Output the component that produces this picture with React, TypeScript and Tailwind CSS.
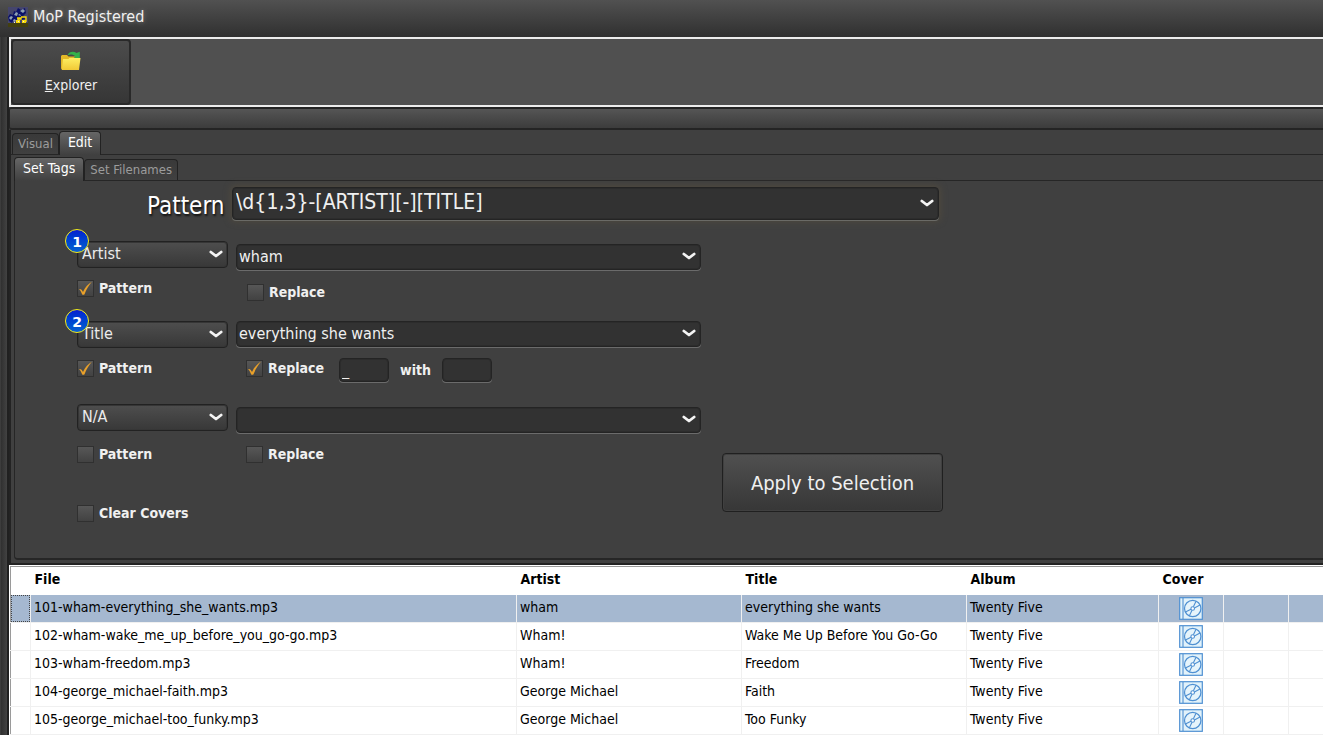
import React from "react";
import { clsx } from "clsx";

type Track = { file: string; artist: string; title: string; album: string };

const tracks: Track[] = [
  { file: "101-wham-everything_she_wants.mp3", artist: "wham", title: "everything she wants", album: "Twenty Five" },
  { file: "102-wham-wake_me_up_before_you_go-go.mp3", artist: "Wham!", title: "Wake Me Up Before You Go-Go", album: "Twenty Five" },
  { file: "103-wham-freedom.mp3", artist: "Wham!", title: "Freedom", album: "Twenty Five" },
  { file: "104-george_michael-faith.mp3", artist: "George Michael", title: "Faith", album: "Twenty Five" },
  { file: "105-george_michael-too_funky.mp3", artist: "George Michael", title: "Too Funky", album: "Twenty Five" },
];

function Chevron() {
  return (
    <svg className="pointer-events-none absolute top-1/2 right-[5px] -mt-[5px] h-2 w-[14px]" viewBox="0 0 14 8" aria-hidden="true">
      <path d="M1.8 2 L7 6 L12.2 2" fill="none" stroke="#f4f4f4" strokeWidth="2.8" strokeLinecap="round" strokeLinejoin="round" />
    </svg>
  );
}

/* Raised drop-down that picks the tag to write */
function TagSelect({ label, value }: { label: string; value: string }) {
  return (
    <div className="relative w-[151px]">
      <select
        aria-label={label}
        defaultValue={value}
        className="block h-[27px] w-full appearance-none rounded-[4px] border border-[#222] bg-linear-to-b from-[#4e4e4e] to-[#383838] pb-px pl-1 text-base leading-5 text-[#ececec] shadow-[inset_0_0_0_1px_#363636]"
      >
        <option>{value}</option>
      </select>
      <Chevron />
    </div>
  );
}

/* Sunken combo box that holds a value */
function Combo({ label, value, large }: { label: string; value: string; large?: boolean }) {
  return (
    <div className={clsx("relative", large ? "w-[707px]" : "w-[465px]")}>
      <select
        aria-label={label}
        defaultValue={value}
        className={clsx(
          "block w-full appearance-none rounded-[4px] border border-[#242424] bg-[#323232] text-[#f0f0f0]",
          large
            ? "h-[33px] pb-[3px] pl-[3px] text-[21px] leading-6 shadow-[inset_0_0_0_1px_#2c2c2c,0_1px_0_#6a6a66,0_0_6px_2px_#4d483e]"
            : "h-[26px] pl-[2px] text-base leading-5 shadow-[inset_0_0_0_1px_#2c2c2c,0_1px_0_#6b6b6b]",
        )}
      >
        <option>{value}</option>
      </select>
      <Chevron />
    </div>
  );
}

function Check({ label, checked }: { label: string; checked?: boolean }) {
  return (
    <label className="flex items-center gap-[5px] text-sm leading-[17px] font-bold text-[#f0f0f0]">
      <span className="relative block size-[17px] shrink-0">
        <input
          type="checkbox"
          defaultChecked={checked}
          className="peer block size-[17px] appearance-none border border-[#303030] bg-linear-to-b from-[#575757] to-[#424242]"
        />
        <svg className="pointer-events-none absolute inset-0 hidden size-[17px] peer-checked:block" viewBox="0 0 17 17" aria-hidden="true">
          <path d="M2.2 9.2 C3.8 8.8 5 10 6 12 C8 7.6 10.8 4.4 15 1.6 C11.8 5.4 9.4 9.6 7.4 14.4 C6.6 15 5.8 15 5.2 14.4 C4.4 12.2 3.4 10.6 2.2 9.2 Z" fill="#e8a02a" />
        </svg>
      </span>
      <span className="-mt-px">{label}</span>
    </label>
  );
}

function Badge({ n }: { n: number }) {
  return (
    <span className="absolute -top-3 -left-3 z-10 flex size-6 items-center justify-center rounded-full border border-[#f2ee1c] bg-linear-to-b from-[#0a1cd0] to-[#0a60d0] pt-px font-['DejaVu_Sans',sans-serif] text-sm leading-none font-bold text-white">
      {n}
    </span>
  );
}

function Tab({ label, active }: { label: string; active?: boolean }) {
  return (
    <button
      type="button"
      role="tab"
      aria-selected={!!active}
      className={clsx(
        "rounded-t-[4px] border border-b-0 border-[#222] leading-5",
        active
          ? "relative z-10 -mb-px h-6 bg-linear-to-b from-[#666] to-[#404040] px-2 pb-1 text-sm text-white"
          : "h-[21px] bg-linear-to-b from-[#393939] to-[#404040] px-[5px] text-[13px] text-[#9c9c9c]",
      )}
    >
      {label}
    </button>
  );
}

function AppLogo() {
  return (
    <svg className="h-5 w-5" viewBox="0 0 20 20" aria-hidden="true">
      <rect width="20" height="17" fill="#45456c" />
      <rect y="16" width="20" height="4" fill="#43400f" />
      <path d="M0 10 L2 7 L5 8 L6 4 L8 5 L10 1 L13 3 L17 1 L18 6 L15 9 L18 11 L14 13 L11 11 L9 15 L6 12 L4 16 L1 14 Z" fill="#0b1268" />
      <path d="M1 11 l2-2 2 1-2 3z M6 8 l2-3 2 1-1 3z M12 4 l3-2 2 2-2 2z M5 13 l2-1 1 2-2 1z M10 8 l2-1 1 2z" fill="#8fa0b4" />
      <path d="M9 11 h4 v1 h-3 v2 M13 10 h5 v5" fill="none" stroke="#f6d90c" strokeWidth="1.4" />
      <path d="M8 13 h4 v3 H8z M14 13 h4 v3 h-4z" fill="#f6d90c" />
      <path d="M10 14 h1 v1 h-1z M15 14 h1 v1 h-1z M6 15 h1 v1 H6z" fill="#f2eee0" />
    </svg>
  );
}

function FolderIcon() {
  return (
    <svg className="h-5 w-5" viewBox="0 0 20 20" aria-hidden="true">
      <defs>
        <linearGradient id="folder" x1="0" y1="0" x2="0" y2="1">
          <stop offset="0" stopColor="#fdee62" />
          <stop offset="1" stopColor="#f1c936" />
        </linearGradient>
      </defs>
      <path d="M0 5 L1 4 H6 L7.5 5.5 H17.5 V18.5 H1 L0 17.5 Z" fill="#e3b927" />
      <path d="M6.5 4.2 C8 .5 12.5 -.2 15.5 2 L18.8 .8 V7 H12.6 L14.4 5.4 C12 3.2 9.2 3.2 6.5 4.2 Z" fill="#33b14a" />
      <path d="M2 8 H7.5 L8.5 7 H19.5 L18 19 H.8 Z" fill="url(#folder)" />
    </svg>
  );
}

function CoverIcon() {
  return (
    <svg className="mx-auto block h-[23px] w-6" viewBox="0 0 24 23" role="img" aria-label="Cover">
      <rect x=".7" y=".7" width="22.6" height="21.6" fill="#e2f2fa" stroke="#4f90d2" strokeWidth="1.2" />
      <path d="M4 1 V22" stroke="#4f90d2" strokeWidth="1.1" />
      <circle cx="13.7" cy="11.5" r="8.2" fill="#e6f4fb" stroke="#4f90d2" strokeWidth="1.2" />
      <circle cx="13.7" cy="11.5" r="1.8" fill="#fff" stroke="#4f90d2" strokeWidth="1.1" />
      <path d="M14.4 9.8 L17 4.2 M15.4 10.9 L21 8 M13 13.2 L10.4 18.8 M12 12.2 L6.4 15" stroke="#4f90d2" strokeWidth="1.1" />
    </svg>
  );
}

const smallInput =
  "block h-6 w-[50px] rounded-[4px] border border-[#242424] bg-[#323232] px-[2px] pb-[2px] text-base leading-5 text-[#f0f0f0] shadow-[inset_0_0_0_1px_#2c2c2c,0_1px_0_#6b6b6b]";

export default function App() {
  return (
    <div className="flex min-h-screen flex-col overflow-hidden bg-[#404040] font-['DejaVu_Sans_Condensed','Noto_Sans',sans-serif]">
      <header className="flex h-[37px] items-center gap-[5px] bg-linear-to-b from-[#515151] to-[#303030] pb-[3px] pl-2">
        <AppLogo />
        <h1 className="text-base leading-5 text-[#f0f0f0] [text-shadow:0_0_5px_#888]">MoP Registered</h1>
      </header>

      <div className="flex grow">
        <div className="w-[9px] shrink-0 border-r-2 border-l border-r-[#202020] border-l-[#3c3c3c] bg-linear-to-r from-[#303030] to-[#424242]" />

        <main className="flex min-w-0 grow flex-col">
          <div className="border-y-2 border-l-2 border-[#ececec] bg-[#505050]">
            <button
              type="button"
              className="flex h-[66px] w-[120px] flex-col items-center rounded-[4px] border-2 border-[#292929] bg-linear-to-b from-[#4c4c4c] to-[#363636] pt-[10px] text-sm leading-5 text-[#f0f0f0]"
            >
              <FolderIcon />
              <span className="mt-1">
                <span className="underline">E</span>xplorer
              </span>
            </button>
          </div>

          <div className="h-[23px] rounded-l-[3px] border-y-2 border-l border-[#242424] bg-linear-to-b from-[#555] to-[#3c3c3c]" />

          <div className="flex grow flex-col border-b-2 border-l-2 border-[#232323] pt-px">
            <div role="tablist" className="flex items-end border-b border-[#262626] pl-px">
              <Tab label="Visual" />
              <Tab label="Edit" active />
            </div>

            <div className="flex grow flex-col pt-[2px] pb-[3px] pl-[3px]">
              <div role="tablist" className="flex items-end border-b border-[#262626]">
                <Tab label="Set Tags" active />
                <Tab label="Set Filenames" />
              </div>

              <form className="h-[379px] rounded-bl-[4px] border-b-2 border-l border-[#262626] pt-[6px] pl-[61px]" onSubmit={(e) => e.preventDefault()}>
                <div className="flex items-center pl-[71px]">
                  <span className="-mb-1 w-[85px] shrink-0 pr-[9px] text-right text-2xl leading-[30px] text-white [text-shadow:1px_2px_2px_#111]">
                    Pattern
                  </span>
                  <Combo large label="Pattern" value="\d{1,3}-[ARTIST][-][TITLE]" />
                </div>

                <div className="flex items-end gap-[21px]">
                  <div className="w-[625px] shrink-0 pt-[21px]">
                    <div className="flex h-20 gap-2 pl-px">
                      <div className="relative flex flex-col gap-3">
                        <Badge n={1} />
                        <TagSelect label="First tag" value="Artist" />
                        <Check label="Pattern" checked />
                      </div>
                      <div className="flex flex-col gap-[14px] pt-[3px]">
                        <Combo label="First value" value="wham" />
                        <div className="pl-[11px]">
                          <Check label="Replace" />
                        </div>
                      </div>
                    </div>

                    <div className="flex h-[83px] gap-2 pl-px">
                      <div className="relative flex flex-col gap-3">
                        <Badge n={2} />
                        <TagSelect label="Second tag" value="Title" />
                        <Check label="Pattern" checked />
                      </div>
                      <div className="flex flex-col gap-[11px]">
                        <Combo label="Second value" value="everything she wants" />
                        <div className="flex items-center pl-[10px]">
                          <div className="w-[93px] pb-[3px]">
                            <Check label="Replace" checked />
                          </div>
                          <input aria-label="Text to replace" defaultValue="_" className={smallInput} />
                          <span className="w-[53px] text-center text-sm leading-5 font-bold text-[#f0f0f0]">with</span>
                          <input aria-label="Replacement" className={smallInput} />
                        </div>
                      </div>
                    </div>

                    <div className="flex gap-2 pl-px">
                      <div className="flex flex-col gap-[15px]">
                        <TagSelect label="Third tag" value="N/A" />
                        <Check label="Pattern" />
                      </div>
                      <div className="flex flex-col gap-[13px] pt-[3px]">
                        <Combo label="Third value" value="" />
                        <div className="pl-[10px]">
                          <Check label="Replace" />
                        </div>
                      </div>
                    </div>

                    <div className="flex pt-[42px] pl-px">
                      <Check label="Clear Covers" />
                    </div>
                  </div>

                  <button
                    type="submit"
                    className="mb-[10px] h-[59px] w-[221px] shrink-0 rounded-[4px] border border-[#202020] bg-linear-to-b from-[#505050] to-[#373737] text-xl leading-6 text-[#f0f0f0] shadow-[inset_0_0_0_1px_#404040]"
                  >
                    Apply to Selection
                  </button>
                </div>
              </form>
            </div>
          </div>

          <div className="border-t border-l border-white bg-white">
            <table className="w-full table-fixed border-collapse border-t border-l border-[#9a9a9a] text-sm leading-5 text-black">
              <colgroup>
                <col className="w-5" />
                <col className="w-[486px]" />
                <col className="w-[225px]" />
                <col className="w-[225px]" />
                <col className="w-48" />
                <col className="w-[65px]" />
                <col className="w-[65px]" />
                <col />
              </colgroup>
              <thead>
                <tr className="h-7 text-left">
                  <td />
                  <th className="p-0 pb-1 pl-1">File</th>
                  <th className="p-0 pb-1 pl-1">Artist</th>
                  <th className="p-0 pb-1 pl-1">Title</th>
                  <th className="p-0 pb-1 pl-1">Album</th>
                  <th className="p-0 pb-1 pl-1">Cover</th>
                  <td />
                  <td />
                </tr>
              </thead>
              <tbody>
                {tracks.map((t, i) => (
                  <tr
                    key={t.file}
                    className={clsx(
                      "h-7 border-b border-[#f0f0f0] [&>td]:border-[#f0f0f0] [&>td]:p-0 [&>td:not(:last-child)]:border-r",
                      i === 0 && "bg-[#a5b8d0]",
                    )}
                  >
                    <td>{i === 0 && <div className="h-[27px] border border-dotted border-[#444]" />}</td>
                    <td>
                      <div className="truncate pb-[3px] pl-[3px]">{t.file}</div>
                    </td>
                    <td>
                      <div className="truncate pb-[3px] pl-[3px]">{t.artist}</div>
                    </td>
                    <td>
                      <div className="truncate pb-[3px] pl-[3px]">{t.title}</div>
                    </td>
                    <td>
                      <div className="truncate pb-[3px] pl-[3px]">{t.album}</div>
                    </td>
                    <td>
                      <CoverIcon />
                    </td>
                    <td />
                    <td />
                  </tr>
                ))}
              </tbody>
            </table>
          </div>
        </main>
      </div>
    </div>
  );
}
